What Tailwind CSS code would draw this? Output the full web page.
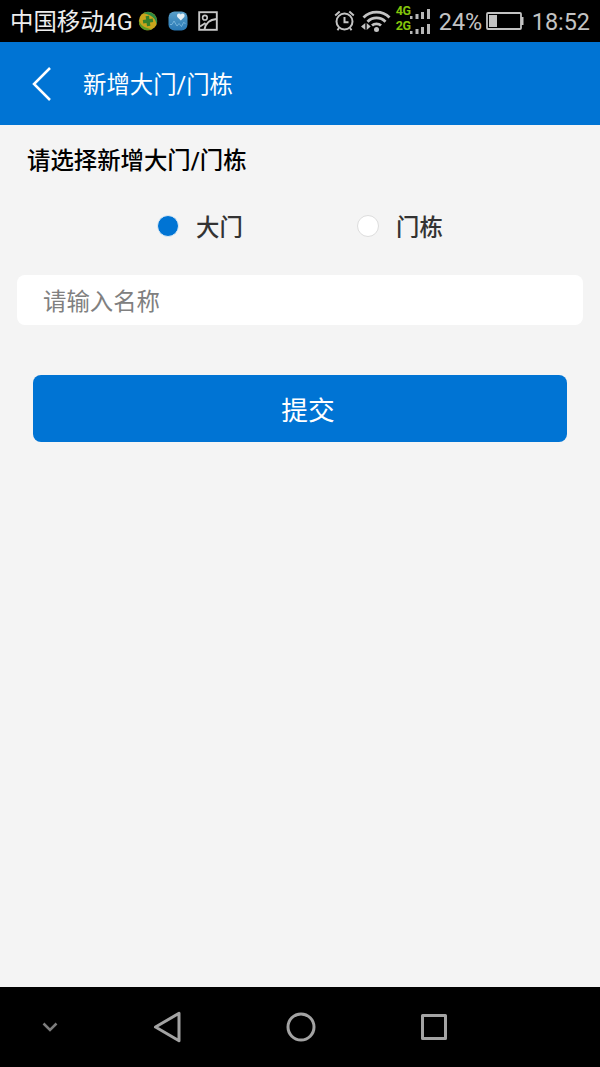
<!DOCTYPE html>
<html lang="zh-CN">
<head>
  <meta charset="UTF-8">
  <meta name="viewport" content="width=device-width, initial-scale=1.0">
  <title>新增大门/门栋</title>
  <script src="https://cdn.jsdelivr.net/npm/@tailwindcss/browser@4"></script>
</head>
<body class="flex h-[1067px] w-[600px] flex-col overflow-hidden bg-[#f4f4f4] font-[Roboto,'Noto_Sans_CJK_SC',sans-serif] text-[23.4px]">
  <!-- Status bar -->
  <div class="flex h-[42px] shrink-0 items-center justify-between bg-black pr-[10px] pl-[10px] leading-none">
    <div class="flex items-center text-[#eeeeee]">
      <span class="w-[123px] pt-[3px] whitespace-nowrap">中国移动4G</span>
      <svg class="ml-[5px] h-5 w-5" viewBox="0 0 20 20">
        <circle cx="10" cy="10" r="9.200" fill="#c9a51c"/>
        <path d="M5 2.300C11-.8 18 2.500 19 9c.2 1.500 0 3-.5 4.500C18 7 12 3 5 2.300Z" fill="#2c8a45"/>
        <path d="M1 9c1 5 6 8.500 13 9-5 3-12 .5-13-6Z" fill="#5f9a25"/>
        <path d="M8.300 5h3.400v3.300H15v3.400h-3.300V15H8.300v-3.300H5V8.300h3.300Z" fill="#35802a" transform="rotate(-8 10 10)"/>
      </svg>
      <svg class="ml-[10px] h-5 w-5" viewBox="0 0 20 20">
        <defs><linearGradient id="app" x1="0" y1="0" x2="0" y2="1"><stop stop-color="#599fc9"/><stop offset="1" stop-color="#2878b5"/></linearGradient></defs>
        <rect x=".5" y=".5" width="19" height="19" rx="6" fill="url(#app)"/>
        <path d="M12.800 9.500 9.300 6c-.9-1.600.2-3.400 1.700-3.400.9 0 1.500.4 1.800 1 .3-.6.900-1 1.800-1 1.600 0 2.600 1.800 1.700 3.400Z" fill="#e3eff5"/>
        <path d="M2 13.500h2L6 10l3 5 2-2.500 2.500 3 2-4 2 1" fill="none" stroke="#8bc4e5" stroke-width=".7"/>
      </svg>
      <svg class="ml-[10px] h-5 w-5" viewBox="0 0 20 20" fill="none" stroke="#c8c8c8" stroke-width="1.900">
        <rect x="1.200" y="1.200" width="17.600" height="17.600"/>
        <circle cx="6.900" cy="6.700" r="2.300" stroke-width="1.600"/>
        <path d="M2 15.500 7.500 12M6.500 18.500C7.500 12.500 12 8.500 18.500 8"/>
      </svg>
    </div>
    <div class="flex items-center text-[#c3c3c3]">
      <svg class="h-6 w-[22px]" viewBox="0 0 22 24" fill="none" stroke="#c3c3c3" stroke-width="2">
        <circle cx="10.500" cy="12.500" r="8"/>
        <path d="M10.500 8v5.300h4M1.200 6.500 5.700 2.500M19.800 6.500 15.300 2.500M5 19l-1.500 2.200M16 19l1.500 2.200" stroke-width="2"/>
      </svg>
      <svg class="ml-[5px] h-6 w-[30px]" viewBox="0 0 30 24" fill="none" stroke="#c3c3c3" stroke-width="2.800">
        <path d="M2.500 8.600C9.500 1.400 21.500 1.400 28.500 8.600M6.500 12.700c5-5 13-5 18 0M11 16.600c2.500-2.400 6.500-2.400 9 0"/>
        <circle cx="15.500" cy="20.500" r="2.500" fill="#c3c3c3" stroke="none"/>
        <path d="M4.300 14v7L0 17.500ZM5.700 14v7l4-3.500Z" fill="#c3c3c3" stroke="none"/>
      </svg>
      <!-- Dual SIM signal -->
      <div class="mr-px mb-[2px] ml-[5px] flex flex-col gap-[3px] text-[12.5px] leading-[12px] font-bold tracking-[-0.5px] text-[#84c40b]">
        <div class="flex h-3 items-end">
          <span class="w-[14px] pb-[2px]">4G</span>
          <svg class="h-[11px] w-5" viewBox="0 0 20 11" fill="#b8b8b8"><path d="M0 8h2.500v3H0ZM5.500 6h3v5h-3ZM11 4h3v7h-3ZM17 1h3v10h-3Z"/></svg>
        </div>
        <div class="flex h-3 items-end">
          <span class="w-[14px] pb-[2px]">2G</span>
          <svg class="h-[11px] w-5" viewBox="0 0 20 11" fill="#b8b8b8"><path d="M0 8h2.500v3H0ZM5.500 6h3v5h-3ZM11 4h3v7h-3ZM17 1h3v10h-3Z"/></svg>
        </div>
      </div>
      <span class="ml-[8px] w-[43px] pt-[3px] whitespace-nowrap">24%</span>
      <svg class="ml-1 h-[18px] w-[38px]" viewBox="0 0 38 18">
        <rect x="1" y="1" width="34" height="16" rx="1" fill="none" stroke="#c3c3c3" stroke-width="1.800"/>
        <path d="M3 3h8v12H3ZM35 5h2.500v8H35Z" fill="#c3c3c3"/>
      </svg>
      <span class="ml-2 pt-[3px] whitespace-nowrap">18:52</span>
    </div>
  </div>

  <!-- Header -->
  <header class="flex h-[83px] shrink-0 items-center bg-[#0074d4] pl-8 text-white">
    <button class="w-[51px]" aria-label="返回">
      <svg class="h-[34px] w-5" viewBox="0 0 20 34" fill="none" stroke="white" stroke-width="2.500"><path d="M18 1 2 17l16 16"/></svg>
    </button>
    <h1 class="pt-[5px]">新增大门/门栋</h1>
  </header>

  <!-- Form -->
  <main class="flex-1">
    <h2 class="mt-[18px] pl-[27px] leading-[36px] font-medium text-black">请选择新增大门/门栋</h2>
    <div class="mt-[29px] flex h-9 items-center pl-[157px] font-medium text-[#333333]">
      <label class="flex w-[200px] items-center">
        <span class="mr-[17px] size-[22px] rounded-full border border-[#dceaf5] bg-[#0074d4]"></span>
        <span class="pt-[5px]">大门</span>
      </label>
      <label class="flex items-center">
        <span class="mr-[17px] size-[22px] rounded-full border border-[#dddddd] bg-white"></span>
        <span class="pt-[5px]">门栋</span>
      </label>
    </div>
    <div class="mx-[17px] mt-[31px] flex h-[50px] items-center rounded-lg bg-white pl-[26px]">
      <input type="text" placeholder="请输入名称" class="w-full pt-[6px] outline-none placeholder:text-[#808080]">
    </div>
    <button class="mx-[33px] mt-[50px] h-[67px] w-[534px] rounded-lg bg-[#0074d4] pt-[5px] pl-4 text-[26.700px] text-white">提交</button>
  </main>

  <!-- System navigation -->
  <nav class="flex h-20 shrink-0 items-center bg-black">
    <svg class="ml-[41px] h-[18px] w-[18px]" viewBox="0 0 18 18" fill="none" stroke="#7d7d7d" stroke-width="2.500"><path d="m2.500 5.500 6.500 6.500 6.500-6.500"/></svg>
    <svg class="ml-[94px] h-8 w-7" viewBox="0 0 28 32" fill="none" stroke="#a3a3a3" stroke-width="3" stroke-linejoin="round"><path d="M2.500 16 26 2.300v27.400Z"/></svg>
    <svg class="ml-[105px] h-[30px] w-[30px]" viewBox="0 0 30 30" fill="none" stroke="#a3a3a3" stroke-width="3"><circle cx="15" cy="15" r="13"/></svg>
    <svg class="ml-[104px] h-7 w-7" viewBox="0 0 28 28" fill="none" stroke="#a3a3a3" stroke-width="3" stroke-linejoin="round"><path d="M2.500 2.500h23v23h-23Z"/></svg>
  </nav>
</body>
</html>
